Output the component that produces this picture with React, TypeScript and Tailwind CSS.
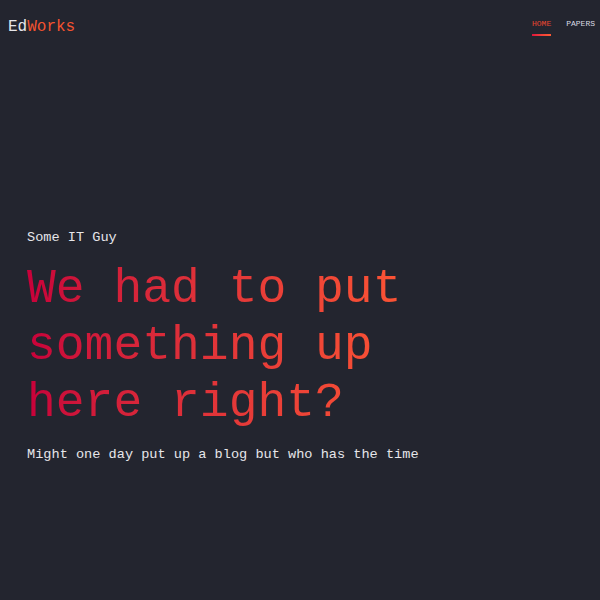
import React from 'react';

const mono = { fontFamily: '"Liberation Mono", "DejaVu Sans Mono", monospace' };

function Header() {
  return (
    <header className="flex h-[52px] items-center justify-between pl-[8px] pr-[5px]">
      <a href="#" className="mt-[2px] text-[16px] leading-none">
        <span className="text-[#e6e6ea]">Ed</span>
        <span className="text-[#f4532f]">Works</span>
      </a>
      <nav className="flex items-start gap-[15px] pt-[3px] text-[8px] uppercase leading-none">
        <a href="#" className="flex flex-col text-[#e8452f]">
          Home
          <span className="mt-[6px] h-[2px] w-full bg-gradient-to-r from-[#e0103c] to-[#ff5a33]" />
        </a>
        <a href="#" className="text-[#d8dae2]">Papers</a>
      </nav>
    </header>
  );
}

export default function App() {
  return (
    <div style={mono} className="min-h-screen bg-[#23252f] text-[#e6e6ea]">
      <Header />
      <main className="pl-[27px] pt-[176px]">
        <p className="text-[13.6px] leading-[20px]">Some IT Guy</p>
        <h1 className="mt-[13px] w-[400px] bg-gradient-to-r from-[#c8003a] to-[#ff5733] bg-clip-text text-[48px] leading-[57px] text-transparent">
          We had to put something up here right?
        </h1>
        <p className="mt-[13px] text-[13.6px] leading-[20px]">
          Might one day put up a blog but who has the time
        </p>
      </main>
    </div>
  );
}
